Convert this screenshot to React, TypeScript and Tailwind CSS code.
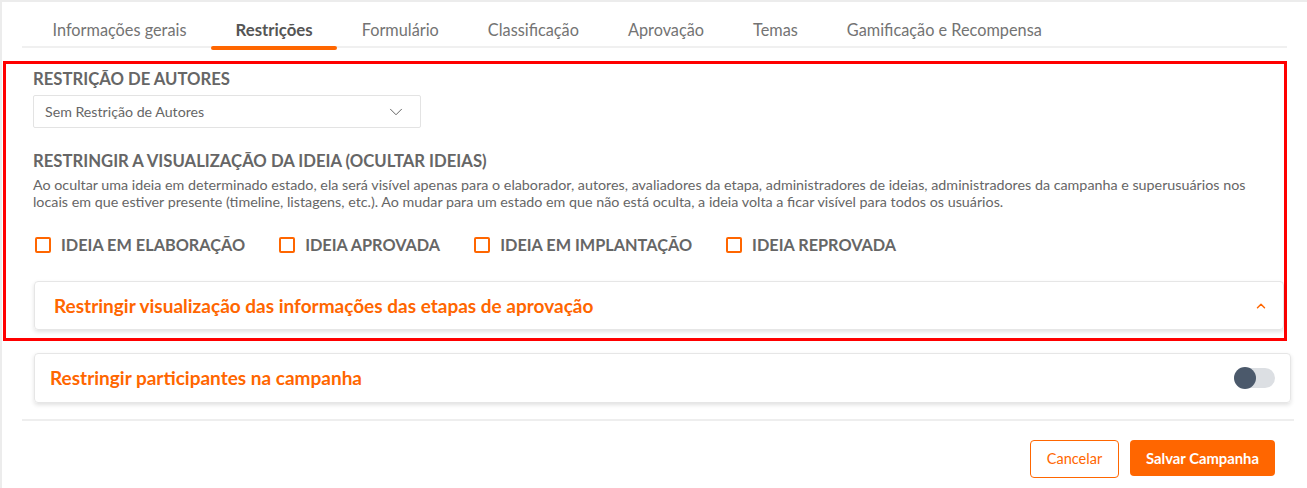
import React, { useState } from 'react';
import { ChevronDown, ChevronUp } from 'lucide-react';

const tabs = [
  'Informações gerais',
  'Restrições',
  'Formulário',
  'Classificação',
  'Aprovação',
  'Temas',
  'Gamificação e Recompensa',
];

const states = [
  'IDEIA EM ELABORAÇÃO',
  'IDEIA APROVADA',
  'IDEIA EM IMPLANTAÇÃO',
  'IDEIA REPROVADA',
];

const App: React.FC = () => {
  const [active, setActive] = useState(1);
  const [checked, setChecked] = useState<boolean[]>([false, false, false, false]);
  const [restrictParticipants, setRestrictParticipants] = useState(false);

  return (
    <div
      className="w-[1307px] h-[488px] bg-white border-l-2 border-t-2 border-[#ececec] overflow-hidden"
      style={{ fontFamily: 'Lato, "Noto Sans", sans-serif' }}
    >
      {/* Tabs */}
      <div className="ml-[20px] w-[1265px] pl-[6px] flex border-b-2 border-[#f0f0f0] h-[46px]">
        {tabs.map((t, i) => (
          <button
            key={t}
            onClick={() => setActive(i)}
            className={`relative px-[24.5px] h-[46px] pt-[10px] flex items-center text-[16.3px] ${
              active === i ? 'font-bold text-[#555] text-[16.8px]' : 'text-[#737373]'
            }`}
          >
            {t}
            {active === i && (
              <span className="absolute left-0 right-0 -bottom-[2px] h-[4px] rounded-full bg-[#ff6600]" />
            )}
          </button>
        ))}
      </div>

      {/* Highlighted section */}
      <div className="mt-[13px] ml-[1px] w-[1284px] h-[280px] border-[3px] border-[#ff0000] pl-[27px] pr-[1px] pt-[5px]">
        <h3 className="text-[16.7px] font-bold text-[#666] leading-[20px]">RESTRIÇÃO DE AUTORES</h3>
        <div className="mt-[6px] w-[388px] h-[33px] border border-[#e3e3e3] rounded-[2px] flex items-center justify-between pl-[11px] pr-[13px]">
          <span className="text-[14.2px] text-[#666]">Sem Restrição de Autores</span>
          <ChevronDown size={22} strokeWidth={1} className="text-[#555]" />
        </div>

        <h3 className="mt-[23px] text-[16.7px] font-bold text-[#666] leading-[20px]">
          RESTRINGIR A VISUALIZAÇÃO DA IDEIA (OCULTAR IDEIAS)
        </h3>
        <p className="mt-[5px] text-[14.3px] leading-[17px] text-[#666] pr-[4px]">
          Ao ocultar uma ideia em determinado estado, ela será visível apenas para o elaborador, autores, avaliadores da etapa, administradores de ideias, administradores da campanha e superusuários nos locais em que estiver presente (timeline, listagens, etc.). Ao mudar para um estado em que não está oculta, a ideia volta a ficar visível para todos os usuários.
        </p>

        <div className="mt-[23px] flex items-center gap-[34px] pl-[2px]">
          {states.map((s, i) => (
            <label key={s} className="flex items-center gap-[10px] cursor-pointer">
              <span
                onClick={() => setChecked(c => c.map((v, j) => (j === i ? !v : v)))}
                className={`w-[16px] h-[16px] rounded-[2px] border-2 border-[#ff6600] ${checked[i] ? 'bg-[#ff6600]' : 'bg-white'}`}
              />
              <span className="text-[16.3px] font-bold text-[#666]">{s}</span>
            </label>
          ))}
        </div>

        <div className="mt-[24px] ml-[1px] w-[1250px] h-[49px] border border-[#e6e6e6] rounded-[4px] shadow-[0_2px_4px_rgba(0,0,0,0.12)] flex items-center justify-between pl-[19px] pr-[15px]">
          <span className="text-[19px] font-bold text-[#ff6600]">
            Restringir visualização das informações das etapas de aprovação
          </span>
          <ChevronUp size={14} strokeWidth={2.5} className="text-[#ff6600]" />
        </div>
      </div>

      {/* Participants */}
      <div className="mt-[12px] ml-[32px] w-[1257px] h-[50px] border border-[#e6e6e6] rounded-[4px] shadow-[0_2px_4px_rgba(0,0,0,0.12)] flex items-center justify-between pl-[15px] pr-[15px]">
        <span className="text-[19px] font-bold text-[#ff6600]">Restringir participantes na campanha</span>
        <button
          onClick={() => setRestrictParticipants(v => !v)}
          className="relative w-[40px] h-[20px] rounded-full bg-[#dcdfe3]"
        >
          <span
            className={`absolute top-1/2 -translate-y-1/2 w-[22px] h-[22px] rounded-full ${
              restrictParticipants ? 'right-0 bg-[#ff6600]' : '-left-[1px] bg-[#4b596b]'
            }`}
          />
        </button>
      </div>

      <div className="mt-[16px] ml-[20px] w-[1272px] border-t-2 border-[#eeeeee]" />

      {/* Footer buttons */}
      <div className="mt-[19px] mr-[32px] flex justify-end gap-[11px]">
        <button className="w-[89px] h-[38px] border border-[#ff6600] rounded-[4px] text-[14.5px] text-[#ff6600] bg-white">
          Cancelar
        </button>
        <button className="w-[145px] h-[36px] rounded-[4px] text-[14.8px] font-bold text-white bg-[#ff6600]">
          Salvar Campanha
        </button>
      </div>
    </div>
  );
};

export default App;
